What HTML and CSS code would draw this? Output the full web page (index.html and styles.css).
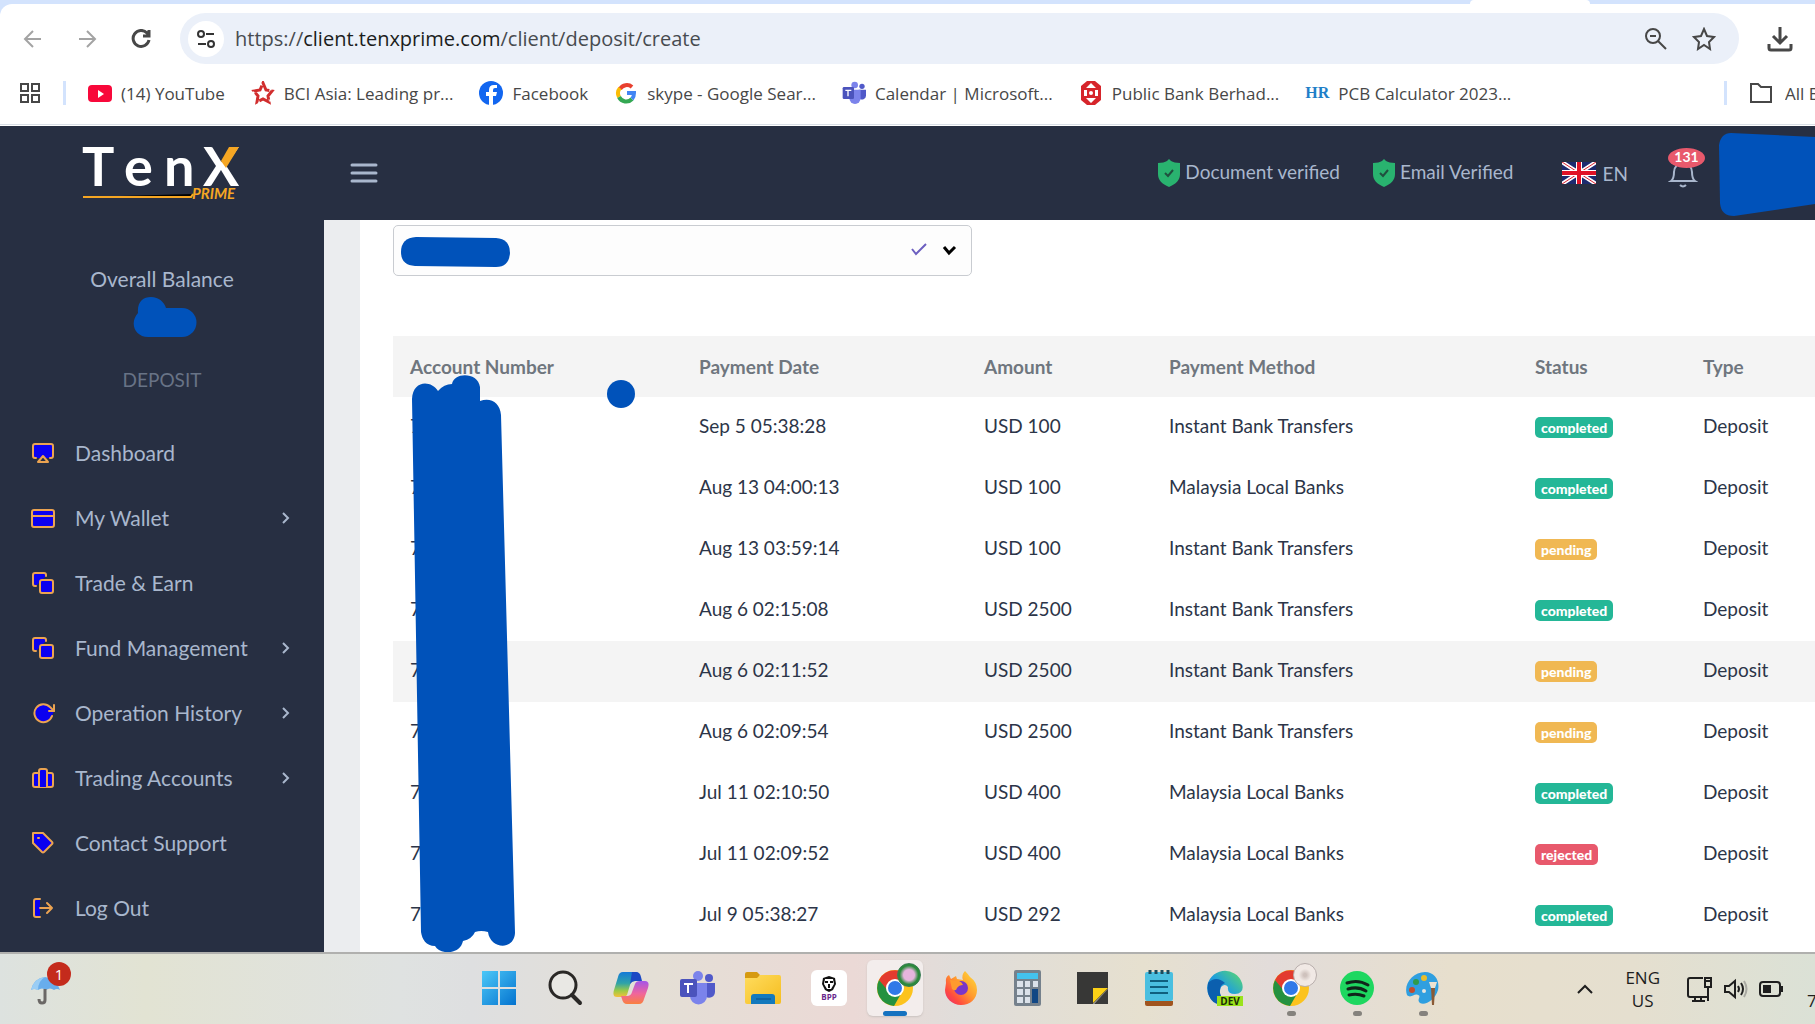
FILE: index.html
```
<!DOCTYPE html>
<html lang="en">
<head>
<meta charset="utf-8">
<title>TenX Prime - Deposit</title>
<link rel="stylesheet" href="styles.css">
</head>
<body>

<!-- shared symbols -->
<svg class="defs" width="0" height="0">
  <defs>
    <linearGradient id="winBlue" x1="0" y1="0" x2="1" y2="1"><stop offset="0" stop-color="#4cc8f8"/><stop offset="1" stop-color="#0473cf"/></linearGradient>
    <linearGradient id="copA" x1="0" y1="0" x2="0" y2="1"><stop offset="0" stop-color="#1379d8"/><stop offset="0.45" stop-color="#2fa3a8"/><stop offset="0.75" stop-color="#9ccb45"/><stop offset="1" stop-color="#f5c03b"/></linearGradient>
    <linearGradient id="copB" x1="0" y1="0" x2="0" y2="1"><stop offset="0" stop-color="#a455e8"/><stop offset="0.55" stop-color="#f0659c"/><stop offset="1" stop-color="#f9803f"/></linearGradient>
    <linearGradient id="folder" x1="0" y1="0" x2="1" y2="1"><stop offset="0" stop-color="#ffdc5e"/><stop offset="1" stop-color="#f5bd1f"/></linearGradient>
    <linearGradient id="fox" x1="1" y1="0" x2="0" y2="1"><stop offset="0" stop-color="#ffe23c"/><stop offset="0.45" stop-color="#ff9a2e"/><stop offset="0.75" stop-color="#ff4a3f"/><stop offset="1" stop-color="#e3287e"/></linearGradient>
    <linearGradient id="edge" x1="0" y1="1" x2="1" y2="0"><stop offset="0" stop-color="#0b62b8"/><stop offset="0.5" stop-color="#1f9fdc"/><stop offset="1" stop-color="#5fdc66"/></linearGradient>
    <symbol id="shield" viewBox="0 0 24 28">
      <path fill="#29b36f" d="M12 0l2 2c2 1 5 2 9 2v11c0 6-4 10-11 13C5 25 1 21 1 15V4c4 0 7-1 9-2z"/>
      <path fill="none" stroke="#20503f" stroke-width="2" d="M8 14l3 3 5-6"/>
    </symbol>
    <symbol id="copy" viewBox="0 0 24 24">
      <path d="M5 15H4a2 2 0 0 1-2-2V4a2 2 0 0 1 2-2h9a2 2 0 0 1 2 2v1"/>
      <rect x="9" y="9" width="13" height="13" rx="2"/>
    </symbol>
    <symbol id="chev" viewBox="0 0 12 14"><path fill="none" stroke="currentColor" stroke-width="2" d="M3 2l5 5-5 5"/></symbol>
    <symbol id="teams" viewBox="0 0 36 36">
      <circle cx="19" cy="6" r="5" fill="#7b83eb"/><circle cx="30" cy="8" r="4" fill="#5059c9"/>
      <path fill="#5059c9" d="M25 13h11v9a6 6 0 0 1-9 5z"/>
      <path fill="#7b83eb" d="M11 13h17v13a8 8 0 0 1-17 0z"/>
      <rect x="1" y="9" width="17" height="18" rx="2" fill="#4b53bc"/>
      <path stroke="#fff" stroke-width="2" fill="none" d="M5 14h9M9 14v9"/>
    </symbol>
    <symbol id="chrome" viewBox="0 0 36 36">
      <circle cx="18" cy="18" r="18" fill="#fcc31e"/>
      <path fill="#e33b2e" d="M2 10a18 18 0 0 1 32 0H18l-8 12z"/>
      <path fill="#24913f" d="M2 10a18 18 0 0 0 15 26l8-14H12z"/>
      <circle cx="18" cy="18" r="9" fill="#fff"/><circle cx="18" cy="18" r="7" fill="#3079e8"/>
    </symbol>
  </defs>
</svg>

<!-- browser -->
<div class="browser">
  <div class="tabstrip"><div class="activeTab"></div></div>
  <div class="toolbar">
    <button class="navBtn dim" aria-label="Back"><svg width="20" height="20" viewBox="0 0 20 20"><path d="M18 10H3M10 2l-8 8 8 8"/></svg></button>
    <button class="navBtn dim" aria-label="Forward"><svg width="20" height="20" viewBox="0 0 20 20"><path d="M2 10h15M10 2l8 8-8 8"/></svg></button>
    <button class="navBtn" aria-label="Reload"><svg width="20" height="20" viewBox="0 0 20 20"><path d="M18 11a8 8 0 1 1-2-7l2 2M18 1v6h-6"/></svg></button>
    <div class="omnibox">
      <button class="siteInfo" aria-label="Site information"><svg width="20" height="20" viewBox="0 0 20 20"><circle cx="5" cy="5" r="3"/><path d="M10 5h8M2 15h8"/><circle cx="15" cy="15" r="3"/></svg></button>
      <div class="url">https://<b>client.tenxprime.com</b>/client/deposit/create</div>
      <button class="omniBtn" aria-label="Zoom"><svg width="24" height="24" viewBox="0 0 24 24"><circle cx="9" cy="9" r="7"/><path d="M14 14l8 8M6 9h6"/></svg></button>
      <button class="omniBtn" aria-label="Bookmark"><svg width="24" height="24" viewBox="0 0 24 24"><path d="M12 2l3 7 7 1-5 5 1 7-6-4-6 4 1-7-5-5 7-1z"/></svg></button>
    </div>
    <button class="navBtn download" aria-label="Downloads"><svg width="26" height="26" viewBox="0 0 26 26"><path d="M13 1v15M6 10l7 7 7-7M2 18v4q0 2 2 2h18q2 0 2-2v-4"/></svg></button>
  </div>
  <nav class="bookmarks">
    <button class="appsBtn" aria-label="Apps"><svg width="22" height="22" viewBox="0 0 22 22"><path d="M2 2h7v7H2zM13 2h7v7h-7zM2 13h7v7H2zM13 13h7v7h-7z"/></svg></button>
    <span class="divider"></span>
    <a href="#"><svg viewBox="0 0 24 24"><rect y="4" width="24" height="17" rx="4" fill="#f8083a"/><path fill="#fff" d="M10 9l6 4-6 4z"/></svg>(14) YouTube</a>
    <a href="#"><svg viewBox="0 0 24 24"><path fill="none" stroke="#d12d2d" stroke-width="3" d="M12 2l3 7 6 1-4 5 1 6-6-3-6 3 1-6-4-5 6-1z" stroke-dasharray="11 2"/></svg>BCI Asia: Leading pr...</a>
    <a href="#"><svg viewBox="0 0 24 24"><circle cx="12" cy="12" r="12" fill="#1266f0"/><path fill="#fff" d="M10 24v-9H7v-4h3V9q0-5 5-5h3v3h-2q-2 0-2 2v2h4l-1 4h-3v9z"/></svg>Facebook</a>
    <a href="#"><svg viewBox="0 0 24 24"><g fill="none" stroke-width="4"><path stroke="#e8402f" d="M6 8a8 8 0 0 1 12-2"/><path stroke="#fbbc05" d="M5 16a8 8 0 0 1 1-9"/><path stroke="#34a853" d="M18 18a8 8 0 0 1-13-2"/><path stroke="#4285f4" d="M13 12h7q0 4-2 6"/></g></svg>skype - Google Sear...</a>
    <a href="#"><svg><use href="#teams"/></svg>Calendar | Microsoft...</a>
    <a href="#"><svg viewBox="0 0 24 24"><path fill="#d6252b" d="M8 0h8l6 5v14l-6 5H8l-6-5V5z"/><path fill="#fff" d="M12 2l5 5H7zM12 22l5-5H7zM5 9h3v6H5zM16 9h3v6h-3z"/><circle cx="12" cy="12" r="2" fill="#fff"/></svg>Public Bank Berhad...</a>
    <a href="#"><span class="hr">HR</span>PCB Calculator 2023...</a>
    <span class="divider last"></span>
    <a href="#" class="allBookmarks"><svg viewBox="0 0 24 24"><path fill="none" stroke="#474747" stroke-width="2" d="M2 3h7l3 3h10v15H2z"/></svg><span>All Bookmarks</span></a>
  </nav>
</div>

<!-- client area header -->
<header class="header">
  <a href="#" class="logo" aria-label="TenX Prime">
    <svg width="160" height="56" viewBox="0 0 160 56">
      <text class="logoName" x="0 42 82 121" y="41">TenX</text>
      <path fill="#f5a623" d="M147 2h10l-13 21-5-7z"/>
      <path stroke="#f5a623" stroke-width="2" d="M1 52h108l2-3"/>
      <text class="logoSub" x="110" y="54">PRIME</text>
    </svg>
  </a>
  <button class="menuBtn" aria-label="Menu"><svg width="28" height="22" viewBox="0 0 28 22"><path d="M2 3h24M2 11h24M2 19h24"/></svg></button>
  <div class="headerRight">
    <span class="verified"><svg width="24" height="28"><use href="#shield"/></svg><span>Document verified</span></span>
    <span class="verified"><svg width="24" height="28"><use href="#shield"/></svg><span>Email Verified</span></span>
    <button class="lang">
      <svg width="34" height="22" viewBox="0 0 34 22"><rect width="34" height="22" fill="#1c2a6e"/><path stroke="#fff" stroke-width="4" d="M0 0l34 22M34 0L0 22"/><path stroke="#d8202f" stroke-width="1" d="M0 0l34 22M34 0L0 22"/><path stroke="#fff" stroke-width="6" d="M17 0v22M0 11h34"/><path stroke="#e01226" stroke-width="4" d="M17 0v22M0 11h34"/></svg>
      EN
    </button>
    <button class="bell" aria-label="Notifications">
      <svg width="30" height="32" viewBox="0 0 30 32"><path d="M3 24q3-2 3-9a9 9 0 0 1 18 0q0 7 3 9zM12 28q3 3 6 0"/></svg>
      <span class="count">131</span>
    </button>
    <svg class="userMask" width="96" height="88" viewBox="0 0 96 88"><path fill="#0052ba" d="M12 4l84 4v67l-81 12Q2 87 1 74L0 16Q2 4 12 4z"/></svg>
  </div>
</header>

<div class="page">
  <aside class="sidebar">
    <div class="balance">Overall Balance</div>
    <svg class="balanceMask" width="64" height="42" viewBox="0 0 64 42"><path fill="#0052ba" d="M5 17C4 6 10 1 18 1c8 0 13 5 15 11h16a14 14 0 0 1 0 29H15C2 41-4 27 5 17z"/></svg>
    <div class="deposit">DEPOSIT</div>
    <nav class="menu">
      <a href="#"><svg class="ico" viewBox="0 0 24 24"><path d="M5 17H4a2 2 0 0 1-2-2V5a2 2 0 0 1 2-2h16a2 2 0 0 1 2 2v10a2 2 0 0 1-2 2h-1"/><path class="plain" d="M12 15l5 6H7z"/></svg>Dashboard</a>
      <a href="#"><svg class="ico" viewBox="0 0 24 24"><rect x="1" y="4" width="22" height="17" rx="2"/><path d="M1 10h22"/></svg>My Wallet<svg class="chev"><use href="#chev"/></svg></a>
      <a href="#"><svg class="ico"><use href="#copy"/></svg>Trade &amp; Earn</a>
      <a href="#"><svg class="ico"><use href="#copy"/></svg>Fund Management<svg class="chev"><use href="#chev"/></svg></a>
      <a href="#"><svg class="ico" viewBox="0 0 24 24"><path d="M21 15a9 9 0 1 1-2-9l4 4"/><path class="plain" d="M23 4v6h-5"/></svg>Operation History<svg class="chev"><use href="#chev"/></svg></a>
      <a href="#"><svg class="ico" viewBox="0 0 24 24"><rect x="2" y="7" width="20" height="14" rx="2"/><path d="M16 21V5a2 2 0 0 0-2-2h-4a2 2 0 0 0-2 2v16"/></svg>Trading Accounts<svg class="chev"><use href="#chev"/></svg></a>
      <a href="#"><svg class="ico" viewBox="0 0 24 24"><path d="M21 13l-8 8q-1 1-2 0L2 12V2h10l9 9q1 1 0 2z"/><path d="M7 7h1"/></svg>Contact Support</a>
      <a href="#"><svg class="ico" viewBox="0 0 24 24"><path d="M9 21H5a2 2 0 0 1-2-2V5a2 2 0 0 1 2-2h4"/><path class="plain" d="M16 17l5-5-5-5M21 12H9"/></svg>Log Out</a>
    </nav>
  </aside>

  <main class="content">
    <div class="panel">
      <div class="selectBox">
        <select aria-label="Account"><option></option></select>
        <svg class="selectMask" width="112" height="32" viewBox="0 0 112 32"><path fill="#0052ba" d="M16 1l80 1q14 1 14 15-1 14-14 14l-81-1Q1 29 1 16 1 2 16 1z"/></svg>
        <svg class="selectIcons" width="48" height="16" viewBox="0 0 48 16"><path stroke="#6c5fc0" d="M2 7l4 5L16 2"/><path stroke="#000" stroke-width="3" d="M34 5l5 6 6-6"/></svg>
      </div>

      <div class="tableBox">
      <table>
        <thead>
          <tr><th class="colAccount">Account Number</th><th class="colDate">Payment Date</th><th class="colAmount">Amount</th><th class="colMethod">Payment Method</th><th class="colStatus">Status</th><th>Type</th></tr>
        </thead>
        <tbody>
          <tr><td>7</td><td>Sep 5 05:38:28</td><td>USD 100</td><td>Instant Bank Transfers</td><td><span class="badge completed">completed</span></td><td>Deposit</td></tr>
          <tr><td>7</td><td>Aug 13 04:00:13</td><td>USD 100</td><td>Malaysia Local Banks</td><td><span class="badge completed">completed</span></td><td>Deposit</td></tr>
          <tr><td>7</td><td>Aug 13 03:59:14</td><td>USD 100</td><td>Instant Bank Transfers</td><td><span class="badge pending">pending</span></td><td>Deposit</td></tr>
          <tr><td>7</td><td>Aug 6 02:15:08</td><td>USD 2500</td><td>Instant Bank Transfers</td><td><span class="badge completed">completed</span></td><td>Deposit</td></tr>
          <tr class="active"><td>7</td><td>Aug 6 02:11:52</td><td>USD 2500</td><td>Instant Bank Transfers</td><td><span class="badge pending">pending</span></td><td>Deposit</td></tr>
          <tr><td>7</td><td>Aug 6 02:09:54</td><td>USD 2500</td><td>Instant Bank Transfers</td><td><span class="badge pending">pending</span></td><td>Deposit</td></tr>
          <tr><td>7</td><td>Jul 11 02:10:50</td><td>USD 400</td><td>Malaysia Local Banks</td><td><span class="badge completed">completed</span></td><td>Deposit</td></tr>
          <tr><td>7</td><td>Jul 11 02:09:52</td><td>USD 400</td><td>Malaysia Local Banks</td><td><span class="badge rejected">rejected</span></td><td>Deposit</td></tr>
          <tr><td>7</td><td>Jul 9 05:38:27</td><td>USD 292</td><td>Malaysia Local Banks</td><td><span class="badge completed">completed</span></td><td>Deposit</td></tr>
        </tbody>
      </table>
      <svg class="accountMask" width="250" height="580" viewBox="0 0 250 580">
        <path fill="#0052ba" d="M1 24C2 5 20 5 27 16q6-7 14-7c2-12 26-12 28 3v14c11-4 20 2 21 14l14 518c-1 18-25 16-27-1q-7-2-13 0-3 7-12 9c-3 14-23 14-28 5-9 0-13-7-14-14z"/>
        <circle cx="210" cy="19" r="14" fill="#0052ba"/>
      </svg>
      </div>
    </div>
  </main>
</div>

<!-- windows taskbar -->
<footer class="taskbar">
  <div class="widgets">
    <button class="weather" aria-label="Weather">
      <svg width="32" height="32" viewBox="0 0 32 32"><path fill="#68adec" d="M1 16Q4 4 15 3q11 1 15 13-3-2-6 0-4-3-8 0-4-3-8 0-4-2-7 0z"/><path fill="#9acdf5" d="M15 3q-7 4-7 13-4-2-7 0Q4 4 15 3z"/><path fill="none" stroke="#6b6866" stroke-width="3" d="M15 15v11q0 3-3 3t-3-4"/></svg>
      <span class="alert">1</span>
    </button>
  </div>
  <div class="apps">
    <button class="app" aria-label="Start"><svg viewBox="0 0 36 36"><path fill="url(#winBlue)" d="M1 1h16v16H1zM19 1h16v16H19zM1 19h16v16H1zM19 19h16v16H19z"/></svg></button>
    <button class="app" aria-label="Search"><svg viewBox="0 0 36 36"><circle cx="16" cy="15" r="13" fill="#e9e8e4" stroke="#2a2826" stroke-width="3"/><path stroke="#2a2826" stroke-width="4" stroke-linecap="round" d="M25 25l8 8"/></svg></button>
    <button class="app" aria-label="Copilot"><svg viewBox="0 0 36 36"><path fill="url(#copA)" d="M10 2h12q4 0 5 5l1 4h-6q-4 0-5 4l-3 10q-1 2-4 2H4q-5 0-3-7L5 7q1-5 5-5z"/><path fill="#1b49c4" d="M19 2h4q4 0 5 5l1 4h-7q-3 0-5 3z"/><path fill="url(#copB)" d="M26 34H14q-4 0-5-5l-1-3h6q4 0 5-4l3-8q1-3 5-3h5q5 0 3 7l-4 11q-1 5-5 5z"/></svg></button>
    <button class="app" aria-label="Teams"><svg><use href="#teams"/></svg></button>
    <button class="app" aria-label="Explorer"><svg viewBox="0 0 36 36"><path fill="#d69a10" d="M0 4q0-2 2-2h10l3 3-2 4H0z"/><path fill="url(#folder)" d="M0 8h12l3-3h19q2 0 2 2v25q0 2-2 2H2q-2 0-2-2z"/><path fill="#1379bd" d="M6 34V27q0-3 3-3h18q3 0 3 3v7z"/><path stroke="#0b4f86" stroke-width="1" d="M11 29h15"/></svg></button>
    <button class="app" aria-label="BPP"><svg viewBox="0 0 36 36"><rect width="36" height="36" rx="6" fill="#fff"/><path fill="#111" d="M12 8l6-2 6 2 1 6-3 6-4 2-4-2-3-6z"/><path fill="#fff" d="M14 9h8l1 5-3 5h-4l-3-5z"/><path stroke="#111" stroke-width="2" d="M14 12h3M19 12h3M18 14v4"/><text class="bpp" x="18" y="30">BPP</text></svg></button>
    <button class="app current" aria-label="Chrome"><svg><use href="#chrome"/></svg><span class="profile green"></span></button>
    <button class="app" aria-label="Firefox"><svg viewBox="0 0 36 36"><path fill="url(#fox)" d="M3 13q-1-6 3-8l2 4 5-3 1 3 6 1Q18 5 22 1q3 3 5 6 7 5 7 13c0 9-7 15-16 15S2 28 2 20z"/><circle cx="18" cy="18" r="7" fill="#7a35c9"/><path fill="#ff9a2e" d="M7 10l9 1q3 1 4 4-4 0-6 3-1 4-5 1z"/></svg></button>
    <button class="app" aria-label="Calculator"><svg viewBox="0 0 36 36"><rect x="5" width="27" height="36" rx="2" fill="#75818c"/><path fill="#43c2ee" d="M8 3h21v6H8z"/><path fill="#dbe2ea" d="M8 11h6v6H8zM16 11h5v6h-5zM24 11h5v6h-5zM8 19h6v6H8zM16 19h5v6h-5zM8 27h6v6H8zM16 27h5v6h-5z"/><path fill="#114784" d="M23 19h6v14h-6z"/></svg></button>
    <button class="app" aria-label="Sticky Notes"><svg viewBox="0 0 36 36"><path fill="#373736" d="M2 2h31v17L18 34H2z"/><path fill="#fcd116" d="M18 18h15L18 33z"/><path fill="#3a3a39" d="M33 19v15H19z"/></svg></button>
    <button class="app" aria-label="Notepad"><svg viewBox="0 0 36 36"><path fill="#a0541e" d="M4 31h28v3q0 2-2 2H6q-2 0-2-2z"/><rect x="4" y="2" width="28" height="29" rx="2" fill="#4abfe0"/><path stroke="#0f5f7e" stroke-width="2" d="M9 11h18M9 17h18M9 23h18"/><path stroke="#1c4a5c" stroke-width="3" d="M9 0v4M15 0v4M21 0v4M27 0v4"/></svg></button>
    <button class="app" aria-label="Edge Dev"><svg viewBox="0 0 36 36"><path fill="url(#edge)" d="M0 18a18 18 0 0 1 35-5q3 10-7 11-8 0-7-7-3-4-7 0-4 10 6 18Q1 34 0 18z"/><path fill="#0b5fae" d="M1 13q8-8 17 0-6 2-5 10 2 8 8 12Q4 37 1 22z"/><rect x="10" y="26" width="26" height="10" fill="#9be31c"/><text class="dev" x="23" y="35">DEV</text></svg></button>
    <button class="app running" aria-label="Chrome profile 2"><svg><use href="#chrome"/></svg><span class="profile light"></span></button>
    <button class="app running" aria-label="Spotify"><svg viewBox="0 0 36 36"><circle cx="18" cy="18" r="17" fill="#1ed760"/><path fill="none" stroke="#10251a" stroke-width="3" stroke-linecap="round" d="M8 13q11-4 21 2M9 19q10-3 18 2M10 25q8-2 15 1"/></svg></button>
    <button class="app running" aria-label="Paint"><svg viewBox="0 0 36 36"><path fill="#2f9fe0" d="M20 2c10 0 15 9 13 18-3 10-13 16-18 13-4-3 2-7-2-8-4-2-7 4-11 0C-2 14 8 2 20 2z"/><circle cx="11" cy="12" r="3" fill="#2f9b4b"/><circle cx="19" cy="8" r="3" fill="#e8bd2c"/><circle cx="7" cy="20" r="3" fill="#c24b2e"/><circle cx="19" cy="21" r="2" fill="#e5e6e0"/><path fill="#ece3d2" d="M24 12h8l-2 6h-4z"/><path fill="#8a5a36" d="M26 18h4l-1 17h-2z"/></svg></button>
  </div>
  <div class="tray">
    <button class="more" aria-label="Hidden icons"><svg width="18" height="12" viewBox="0 0 18 12"><path d="M2 10l7-7 7 7"/></svg></button>
    <div class="ime">ENG<br>US</div>
    <svg class="trayIcon" width="26" height="26" viewBox="0 0 26 26"><path d="M16 2H3Q1 2 1 4v15q0 2 2 2h18V12M8 21v4M14 21v4M5 25h13M18 2h6v9h-6zM18 5h6M21 11v14"/></svg>
    <svg class="trayIcon" width="26" height="22" viewBox="0 0 26 22"><path d="M2 8h4l6-5v16l-6-5H2zM15 8q2 3 0 6M18 5q4 6 0 12"/><path class="faint" d="M21 3q5 8 0 16"/></svg>
    <svg class="trayIcon battery" width="26" height="18" viewBox="0 0 26 18"><rect x="1" y="2" width="20" height="14" rx="3"/><path class="solid" d="M4 5h8v8H4z"/><path class="solid" d="M22 6h2v6h-2z"/></svg>
    <div class="clock">7</div>
  </div>
</footer>

</body>
</html>
```
FILE: styles.css
```
* {
    box-sizing: border-box;
}

body {
    margin: 0;
    height: 100vh;
    display: flex;
    flex-direction: column;
    overflow: hidden;
    font-family: Lato, sans-serif;
    font-size: 19px;
    background: #fff;
}

button {
    padding: 0;
    border: 0;
    background: none;
    color: inherit;
    font: inherit;
}

a {
    color: inherit;
    text-decoration: none;
}

svg {
    display: block;
    flex: none;
}

.defs {
    position: absolute;
}

/* browser */
.browser {
    background: #d3e3fd;
    font-family: "Open Sans", sans-serif;
    border-bottom: 1px solid #fff;
}

.tabstrip {
    height: 4px;
    padding-left: 81%;
}

.activeTab {
    width: 120px;
    height: 4px;
    background: #fff;
    border-radius: 4px 4px 0 0;
}

.toolbar {
    display: flex;
    align-items: center;
    padding: 9px 0 0 12px;
    background: #fff;
    border-radius: 12px 0 0 0;
}

.navBtn {
    width: 42px;
    margin-right: 12px;
    display: flex;
    justify-content: center;
    fill: none;
    stroke: #474747;
    stroke-width: 3;
}

.navBtn.dim {
    stroke: #a3a3a3;
    stroke-width: 2;
}

.omnibox {
    flex: 1;
    display: flex;
    align-items: center;
    height: 51px;
    margin-left: 6px;
    padding: 0 11px 0 8px;
    border-radius: 26px;
    background: #ebf0f9;
}

.siteInfo {
    width: 36px;
    height: 36px;
    display: flex;
    align-items: center;
    justify-content: center;
    border-radius: 50%;
    background: #fff;
    fill: none;
    stroke: #333;
    stroke-width: 2;
}

.url {
    flex: 1;
    margin-left: 11px;
    font-size: 20px;
    color: #474b50;
}

.url b {
    font-weight: 400;
    color: #1b1d20;
}

.omniBtn {
    width: 48px;
    display: flex;
    justify-content: center;
    fill: none;
    stroke: #474747;
    stroke-width: 2;
}

.download {
    margin: 0 14px 0 20px;
}

.bookmarks {
    display: flex;
    align-items: center;
    height: 61px;
    padding: 0 0 2px 19px;
    background: #fff;
    border-bottom: 1px solid #d9dfe6;
    font-size: 17px;
    color: #474747;
    white-space: nowrap;
}

.bookmarks a {
    display: flex;
    align-items: center;
    gap: 9px;
    margin-right: 26px;
}

.bookmarks a svg {
    width: 24px;
    height: 24px;
}

.appsBtn {
    fill: none;
    stroke: #474747;
    stroke-width: 2;
}

.divider {
    width: 3px;
    height: 24px;
    margin: 0 22px;
    background: #d3e3fd;
}

.divider.last {
    margin-left: auto;
}

.bookmarks .allBookmarks {
    margin-right: 0;
    gap: 12px;
}

.allBookmarks span {
    width: 30px;
    overflow: hidden;
}

.hr {
    width: 24px;
    font-family: "Liberation Serif", serif;
    font-size: 16px;
    font-weight: 700;
    color: #1f7fc8;
}

/* header */
.header {
    display: flex;
    align-items: center;
    height: 94px;
    flex: none;
    background: #272f42;
    color: #a9b7cd;
}

.logo {
    width: 324px;
    padding-left: 82px;
}

.logoName {
    font-size: 54px;
    font-weight: 700;
    fill: #fff;
}

.logoSub {
    font-size: 15px;
    font-weight: 700;
    font-style: italic;
    fill: #f5a623;
}

.menuBtn {
    margin-left: 26px;
    stroke: #a9b7cd;
    stroke-width: 3;
    stroke-linecap: round;
}

.headerRight {
    display: flex;
    align-items: center;
    margin-left: auto;
}

.verified {
    display: flex;
    align-items: center;
    gap: 4px;
    margin-right: 32px;
}

.verified span {
    padding-bottom: 4px;
}

.lang {
    display: flex;
    align-items: center;
    gap: 7px;
    margin: 0 40px 0 16px;
}

.bell {
    position: relative;
    margin-right: 21px;
    fill: none;
    stroke: #a9b7cd;
    stroke-width: 2;
}

.count {
    position: absolute;
    left: 0;
    top: -9px;
    width: 37px;
    height: 20px;
    border-radius: 50%;
    background: #e8596c;
    color: #fff;
    font-size: 14px;
    font-weight: 700;
    line-height: 18px;
    text-align: center;
}

/* page */
.page {
    flex: 1;
    min-height: 0;
    display: flex;
}

.sidebar {
    width: 324px;
    flex: none;
    padding-top: 46px;
    background: #272f42;
    color: #a9b7cd;
    font-size: 21px;
    overflow: hidden;
}

.balance, .deposit {
    text-align: center;
    line-height: 26px;
}

.balanceMask {
    margin: 4px auto 0 133px;
}

.deposit {
    margin-top: 29px;
    font-size: 19px;
    color: #687386;
}

.menu {
    margin-top: 28px;
}

.menu a {
    display: flex;
    align-items: center;
    height: 65px;
    padding: 0 32px 2px 31px;
}

.ico {
    width: 24px;
    height: 24px;
    margin-right: 20px;
    fill: #0b00f0;
    stroke: #eba351;
    stroke-width: 2;
    stroke-linejoin: round;
    stroke-linecap: round;
}

.ico .plain {
    fill: none;
}

.chev {
    width: 12px;
    height: 14px;
    margin-left: auto;
}

.content {
    flex: 1;
    min-width: 0;
    padding-left: 36px;
    background: #ebedef;
}

.panel {
    height: 100%;
    padding: 5px 0 0 33px;
    background: #fff;
    overflow: hidden;
}

.selectBox {
    position: relative;
    width: 579px;
    height: 51px;
    margin-bottom: 60px;
}

.selectBox select {
    width: 100%;
    height: 100%;
    appearance: none;
    border: 1px solid #c9ccd1;
    border-radius: 5px;
    background: #fdfdfd;
}

.selectMask {
    position: absolute;
    left: 7px;
    top: 11px;
}

.selectIcons {
    position: absolute;
    right: 14px;
    top: 17px;
    fill: none;
    stroke-width: 2;
}

.tableBox {
    position: relative;
}

table {
    width: 100%;
    table-layout: fixed;
    border-collapse: collapse;
    color: #2c3548;
}

th, td {
    height: 61px;
    padding: 0 0 4px 17px;
    text-align: left;
    white-space: nowrap;
}

th {
    padding-bottom: 1px;
    color: #6f767e;
    font-weight: 700;
}

thead tr, .active {
    background: #f4f4f4;
}

.colAccount { width: 289px; }
.colDate { width: 285px; }
.colAmount { width: 185px; }
.colMethod { width: 366px; }
.colStatus { width: 168px; }

.badge {
    display: inline-block;
    padding: 0 6px;
    border-radius: 5px;
    color: #fff;
    font-size: 14px;
    font-weight: 900;
    line-height: 21px;
    vertical-align: middle;
}

.completed { background: #24b797; }
.pending { background: #f0b853; }
.rejected { background: #e8596c; }

.accountMask {
    position: absolute;
    left: 18px;
    top: 39px;
}

/* taskbar */
.taskbar {
    display: flex;
    height: 72px;
    flex: none;
    border-top: 2px solid #b0b0ae;
    background: linear-gradient(90deg, #dde2df 0%, #e2e3d3 8%, #dfe2e1 22%, #dedfe0 26%, #e4dfd6 36%, #ebd9d6 47%, #e0ddda 53%, #e6e0cf 63%, #e2dcda 70%, #e7dfcd 80%, #e5dfcf 90%, #dbe1d6 100%);
    font-family: "Open Sans", sans-serif;
    font-size: 17px;
    color: #1e1e1e;
    overflow: hidden;
}

.widgets {
    width: 466px;
    flex: none;
    padding: 20px 0 0 30px;
}

.weather {
    position: relative;
}

.alert {
    position: absolute;
    left: 17px;
    top: -12px;
    width: 24px;
    height: 24px;
    border-radius: 50%;
    background: #c42b1c;
    color: #fff;
    font-size: 15px;
    line-height: 24px;
}

.apps {
    display: flex;
    flex: none;
}

.app {
    position: relative;
    width: 56px;
    height: 56px;
    margin: 6px 5px;
    padding: 0 10px;
    border-radius: 6px;
}

.app svg {
    width: 36px;
    height: 36px;
}

.current {
    background: #f3edec;
    box-shadow: 0 1px 2px #c9c2bf;
}

.current::after, .running::after {
    content: "";
    position: absolute;
    left: 24px;
    bottom: 0;
    width: 9px;
    height: 5px;
    border-radius: 3px;
    background: #85827d;
}

.current::after {
    left: 16px;
    width: 24px;
    background: #1572c0;
}

.profile {
    position: absolute;
    right: 2px;
    top: 3px;
    width: 24px;
    height: 24px;
    border-radius: 50%;
}

.green {
    background: radial-gradient(#e6b5dd 35%, #2c8a3c 60%);
    border: 1px solid #3a7d54;
}

.light {
    background: radial-gradient(#cfc2bd 10%, #f1e9e5 40%);
    border: 1px solid #b8aeac;
}

.bpp {
    font-size: 8px;
    font-weight: 700;
    text-anchor: middle;
    fill: #6a2a8c;
}

.dev {
    font-size: 10px;
    font-weight: 700;
    text-anchor: middle;
    fill: #1c2b06;
}

.tray {
    display: flex;
    align-items: center;
    margin-left: auto;
    fill: none;
    stroke: #1e1e1e;
    stroke-width: 2;
}

.more {
    margin-right: 31px;
}

.ime {
    margin-right: 27px;
    text-align: center;
    line-height: 23px;
}

.trayIcon {
    margin-right: 10px;
}

.battery {
    margin-right: 22px;
}

.faint {
    stroke: #a9a9a2;
}

.solid {
    fill: #1e1e1e;
    stroke: none;
}

.clock {
    width: 8px;
    padding-top: 22px;
}
```
